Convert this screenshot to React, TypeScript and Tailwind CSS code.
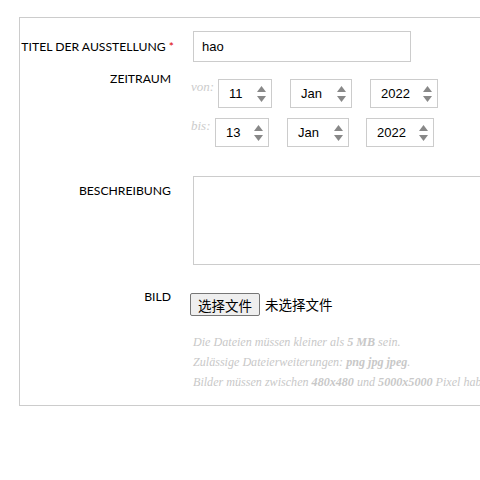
import React from 'react';

const Arrows = () => (
  <svg width="9" height="16" viewBox="0 0 9 16" className="shrink-0">
    <path d="M4.5 0 L9 6 L0 6 Z" fill="#888" />
    <path d="M4.5 16 L9 10 L0 10 Z" fill="#888" />
  </svg>
);

function Select({ value, width }: { value: string; width: string }) {
  return (
    <div
      className={`flex h-[29px] items-center justify-between border border-[#ccc] bg-white pl-[10px] pr-[5px] text-[13px] text-black ${width}`}
    >
      <span>{value}</span>
      <Arrows />
    </div>
  );
}

const serif = { fontFamily: '"Liberation Serif", serif' };

export default function App() {
  return (
    <div className="h-[480px] w-[480px] overflow-hidden bg-white" style={{ fontFamily: 'Lato, sans-serif' }}>
      <div className="pl-[19px] pt-[17px]">
        <div className="w-[520px] border-b border-l border-t border-[#ccc] pb-[13px]">
          {/* titel */}
          <div className="mt-[13px] flex">
            <div className="w-[154px] pt-[7px] text-right text-[12.2px] text-black">
              TITEL DER AUSSTELLUNG <span className="text-[#d00]">*</span>
            </div>
            <div
              className="ml-[19px] flex h-[31px] w-[218px] items-center border border-[#ccc] px-[8px] text-[13px] text-black"
              style={{ fontFamily: '"Liberation Sans", sans-serif' }}
            >
              hao
            </div>
          </div>

          {/* zeitraum */}
          <div className="mt-[7px] flex">
            <div className="w-[151px] pt-[1px] text-right text-[12.2px] text-black">ZEITRAUM</div>
            <div className="ml-[20px] flex flex-col gap-[10px] pt-[10px]" style={{ fontFamily: '"Liberation Sans", sans-serif' }}>
              <div className="flex items-start">
                <span className="w-[27px] text-[13px] italic leading-[16px] text-[#ccc]" style={serif}>von:</span>
                <Select value="11" width="w-[54px]" />
                <div className="w-[18px]" />
                <Select value="Jan" width="w-[62px]" />
                <div className="w-[18px]" />
                <Select value="2022" width="w-[68px]" />
              </div>
              <div className="flex items-start">
                <span className="w-[24px] text-[13px] italic leading-[16px] text-[#ccc]" style={serif}>bis:</span>
                <Select value="13" width="w-[54px]" />
                <div className="w-[18px]" />
                <Select value="Jan" width="w-[62px]" />
                <div className="w-[17px]" />
                <Select value="2022" width="w-[68px]" />
              </div>
            </div>
          </div>

          {/* beschreibung */}
          <div className="mt-[29px] flex">
            <div className="w-[151px] pt-[6px] text-right text-[12.2px] text-black">BESCHREIBUNG</div>
            <div className="ml-[22px] h-[89px] w-[320px] border border-[#ccc]" />
          </div>

          {/* bild */}
          <div className="mt-[27px] flex">
            <div className="-mt-[4px] w-[151px] text-right text-[12.2px] text-black">BILD</div>
            <div className="ml-[19px] flex flex-col">
              <div className="mt-[1px] flex items-center" style={{ fontFamily: '"Noto Sans CJK SC", sans-serif' }}>
                <button className="h-[23px] rounded-[2px] border border-[#767676] bg-[#efefef] px-[7px] text-[13.5px] leading-[20px] text-black">
                  选择文件
                </button>
                <span className="ml-[5px] text-[13.5px] text-black">未选择文件</span>
              </div>
              <div
                className="mt-[16px] ml-[3px] flex flex-col whitespace-nowrap text-[12.1px] italic leading-[20px] text-[#c8c8c8]"
                style={serif}
              >
                <span>Die Dateien müssen kleiner als <b>5 MB</b> sein.</span>
                <span>Zulässige Dateierweiterungen: <b>png jpg jpeg</b>.</span>
                <span>Bilder müssen zwischen <b>480x480</b> und <b>5000x5000</b> Pixel haben.</span>
              </div>
            </div>
          </div>
        </div>
      </div>
    </div>
  );
}
